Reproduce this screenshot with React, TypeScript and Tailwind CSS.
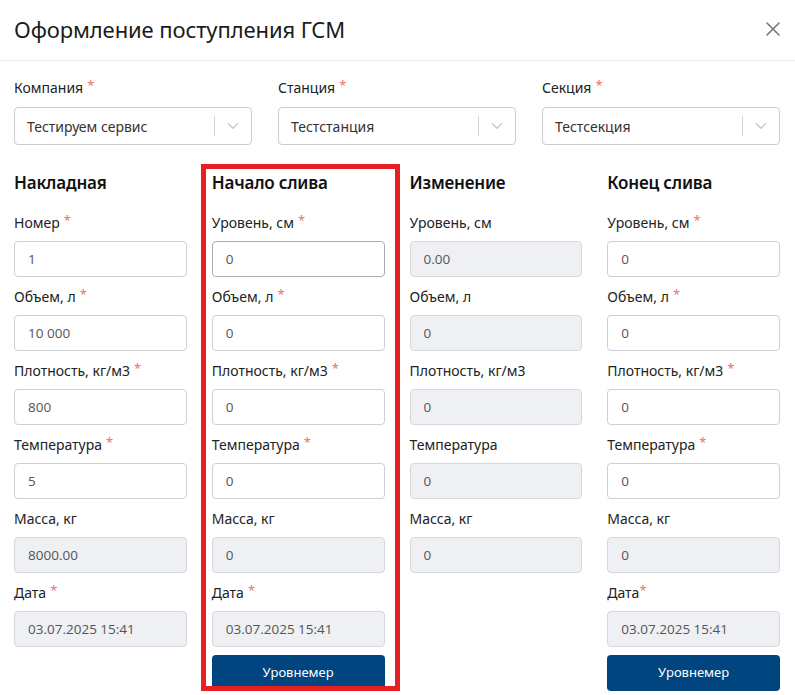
import { ChevronDown } from "lucide-react";

type Field = { label: string; value: string; required?: boolean; tight?: boolean; disabled?: boolean; focus?: boolean };
type Column = { title: string; fields: Field[]; button?: boolean };

const selects = [
  { label: "Компания", value: "Тестируем сервис" },
  { label: "Станция", value: "Тестстанция" },
  { label: "Секция", value: "Тестсекция" }
];

const columns: Column[] = [
  {
    title: "Накладная",
    fields: [
      { label: "Номер", value: "1", required: true },
      { label: "Объем, л", value: "10 000", required: true },
      { label: "Плотность, кг/м3", value: "800", required: true },
      { label: "Температура", value: "5", required: true },
      { label: "Масса, кг", value: "8000.00", disabled: true },
      { label: "Дата", value: "03.07.2025 15:41", required: true, disabled: true }
    ]
  },
  {
    title: "Начало слива",
    button: true,
    fields: [
      { label: "Уровень, см", value: "0", required: true, focus: true },
      { label: "Объем, л", value: "0", required: true },
      { label: "Плотность, кг/м3", value: "0", required: true },
      { label: "Температура", value: "0", required: true },
      { label: "Масса, кг", value: "0", disabled: true },
      { label: "Дата", value: "03.07.2025 15:41", required: true, disabled: true }
    ]
  },
  {
    title: "Изменение",
    fields: [
      { label: "Уровень, см", value: "0.00", disabled: true },
      { label: "Объем, л", value: "0", disabled: true },
      { label: "Плотность, кг/м3", value: "0", disabled: true },
      { label: "Температура", value: "0", disabled: true },
      { label: "Масса, кг", value: "0", disabled: true }
    ]
  },
  {
    title: "Конец слива",
    button: true,
    fields: [
      { label: "Уровень, см", value: "0", required: true },
      { label: "Объем, л", value: "0", required: true },
      { label: "Плотность, кг/м3", value: "0", required: true },
      { label: "Температура", value: "0", required: true },
      { label: "Масса, кг", value: "0", disabled: true },
      { label: "Дата", value: "03.07.2025 15:41", required: true, tight: true, disabled: true }
    ]
  }
];

function Label({ text, required, tight }: { text: string; required?: boolean; tight?: boolean }) {
  return (
    <div className="h-5 leading-5 text-[14px] text-[#222]">
      {text}
      {required && (
        <span className={`text-[#f36d6d] text-[13px] relative -top-[3px] ${tight ? "ml-0" : "ml-1"}`}>*</span>
      )}
    </div>
  );
}

export default function App() {
  return (
    <div className="relative w-[795px] h-[695px] overflow-hidden bg-white font-['Noto_Sans',sans-serif]">
      <div className="h-[61px] px-[14px] pr-[15px] flex items-center justify-between border-b border-[#ececec] pb-[3px]">
        <h2 className="text-[22px] text-[#1b1b1b] leading-7 tracking-[-0.1px]">Оформление поступления ГСМ</h2>
        <svg width="14" height="14" viewBox="0 0 14 14" className="text-[#777]">
          <path d="M1 1L13 13M13 1L1 13" stroke="currentColor" strokeWidth="1.6" strokeLinecap="round" />
        </svg>
      </div>

      <div className="px-[14px] pr-[15px]">
        <div className="grid grid-cols-3 gap-[26px] pt-[17px]">
          {selects.map((s) => (
            <div key={s.label}>
              <Label text={s.label} required />
              <div className="mt-[9px] h-[38px] border border-[#cccccc] rounded-[4px] flex items-center">
                <span className="flex-1 pl-[12px] text-[14px] text-[#333]">{s.value}</span>
                <span className="w-px h-[20px] bg-[#d6d6d6]" />
                <ChevronDown className="w-[18px] h-[18px] text-[#cccccc] mx-[9px]" strokeWidth={2} />
              </div>
            </div>
          ))}
        </div>

        <div className="grid grid-cols-4 gap-[25px] mt-[26px]">
          {columns.map((c) => (
            <div key={c.title}>
              <h3 className="h-6 leading-6 text-[17px] font-semibold text-[#111] mb-[18px] tracking-[-0.2px]">{c.title}</h3>
              {c.fields.map((f) => (
                <div key={f.label} className="mb-[10px]">
                  <Label text={f.label} required={f.required} tight={f.tight} />
                  <div
                    className={`mt-[8px] h-[36px] rounded-[4px] border flex items-center pl-[13px] text-[13.5px] text-[#555] font-['Open_Sans',sans-serif] ${
                      f.disabled
                        ? "bg-[#eef0f4] border-[#d5d8dd]"
                        : f.focus
                        ? "bg-white border-[#a9adb3]"
                        : "bg-white border-[#cdd0d5]"
                    }`}
                  >
                    {f.value}
                  </div>
                </div>
              ))}
              {c.button && (
                <button className="-mt-[2px] w-full h-[36px] rounded-[4px] bg-[#00457f] text-white text-[13px]">
                  Уровнемер
                </button>
              )}
            </div>
          ))}
        </div>
      </div>

      <div className="absolute left-[201px] top-[164px] w-[199px] h-[527px] border-[5px] border-[#e81e25] pointer-events-none" />
    </div>
  );
}
